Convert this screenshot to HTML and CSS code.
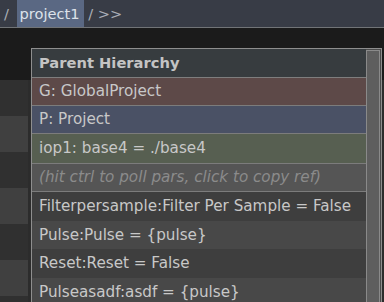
FILE: index.html
```html
<!DOCTYPE html>
<html lang="en">
<head>
  <meta charset="UTF-8" />
  <title>Parent Hierarchy</title>
  <link rel="stylesheet" href="styles.css">
</head>
<body>

  <div class="path-bar">/ <span class="crumb">project1</span> / &gt;&gt;</div>

  <div class="gap"></div>

  <!-- striped rows behind the popup -->
  <div class="list">
    <div class="list-row dark"></div>
    <div class="list-row light"></div>
    <div class="list-row dark"></div>
    <div class="list-row light"></div>
    <div class="list-row dark"></div>
    <div class="list-row light"></div>
    <div class="list-row dark"></div>
  </div>

  <div class="popup">
    <div class="popup-body">
      <div class="popup-title">Parent Hierarchy</div>
      <div class="item global">G: GlobalProject</div>
      <div class="item project">P: Project</div>
      <div class="item iop">iop1: base4 = ./base4</div>
      <div class="item hint">(hit ctrl to poll pars, click to copy ref)</div>
      <div class="item par even">Filterpersample:Filter Per Sample = False</div>
      <div class="item par odd">Pulse:Pulse = {pulse}</div>
      <div class="item par even">Reset:Reset = False</div>
      <div class="item par odd">Pulseasadf:asdf = {pulse}</div>
    </div>
    <div class="scroll-track">
      <div class="scroll-thumb"></div>
    </div>
  </div>

</body>
</html>
```

FILE: styles.css
```css
body {
  margin: 0;
  width: 384px;
  height: 302px;
  overflow: hidden;
  background: #1b1b1b;
  font-family: 'DejaVu Sans', Verdana, sans-serif;
  position: relative;
}

.path-bar {
  height: 27px;
  background: #383c46;
  border-bottom: 1px solid #717477;
  padding-left: 4px;
  font-size: 14.6px;
  line-height: 27px;
  color: #a9aeb6;
  white-space: pre;
}

.crumb {
  display: inline-block;
  margin-left: 3px;
  background: #5a6883;
  color: #dde2ea;
  padding: 0 4px 0 3px;
}

.gap {
  height: 52px;
}

.list-row {
  height: 36px;
  border-left: 28px solid;
  background: #2c2c2c;
}

.list-row.dark {
  border-left-color: #303030;
}

.list-row.light {
  border-left-color: #404040;
}

.popup {
  position: absolute;
  left: 31px;
  top: 48px;
  width: 349px;
  height: 270px;
  border: 1px solid #8e8e8e;
  background: #4a4a4a;
  display: flex;
}

.popup-body {
  width: 334px;
  font-size: 15.2px;
  color: #c8c8c8;
}

.popup-title {
  height: 28px;
  line-height: 28px;
  padding-left: 7px;
  background: #373c3f;
  border-bottom: 1px solid #7e7e7e;
  font-size: 14.7px;
  font-weight: bold;
  color: #c4c4c4;
}

.item {
  height: 27px;
  line-height: 27px;
  padding-left: 7px;
  white-space: nowrap;
}

.global {
  background: #5d4948;
  border-bottom: 1px solid #7c7c7c;
}

.project {
  background: #4a5165;
  border-bottom: 1px solid #7c7c7c;
}

.iop {
  height: 29px;
  line-height: 29px;
  background: #575f51;
  border-bottom: 1px solid #7c7c7c;
}

.hint {
  background: #555555;
  border-bottom: 1px solid #7c7c7c;
  font-style: italic;
  color: #8b8b8b;
}

.par {
  height: 28.5px;
  line-height: 28px;
}

.par.even {
  background: #3e3e3e;
}

.par.odd {
  background: #484848;
}

.scroll-track {
  width: 15px;
  padding-top: 1px;
  background: #4a4a4a;
}

.scroll-thumb {
  width: 12px;
  height: 100%;
  border: 1px solid #8a8a8a;
  background: #5e5e5e;
}
```
